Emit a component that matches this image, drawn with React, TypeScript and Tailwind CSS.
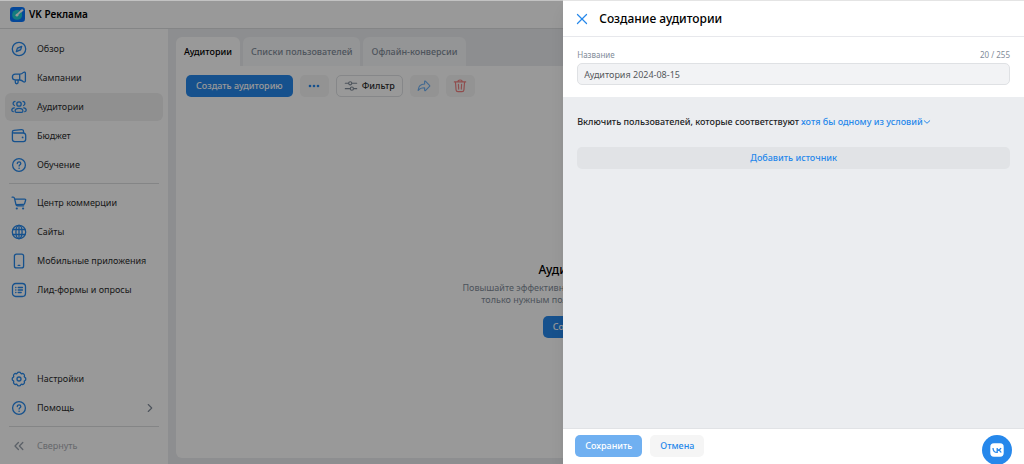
import React from "react";
import type { ReactNode } from "react";

type IconProps = { children: ReactNode; className?: string };

function Icon({ children, className = "size-4" }: IconProps) {
  return (
    <svg
      viewBox="0 0 16 16"
      fill="none"
      stroke="currentColor"
      strokeWidth="1.3"
      strokeLinecap="round"
      strokeLinejoin="round"
      aria-hidden="true"
      className={`${className} shrink-0`}
    >
      {children}
    </svg>
  );
}

const CompassIcon = () => (
  <Icon>
    <circle cx="8" cy="8" r="6.7" />
    <path d="M10.7 5.3 9.6 8.9 5.3 10.7 6.4 7.1z" />
    <circle cx="8" cy="8" r=".5" fill="currentColor" stroke="none" />
  </Icon>
);

const MegaphoneIcon = () => (
  <Icon>
    <path d="M8.7 4.2H4.3a2.900 2.900 0 0 0 0 5.800h4.400zM8.700 4.200c1.700 0 2.900-.9 3.800-1.800.6-.5 1.900-.2 1.900.8v7.800c0 1-1.300 1.300-1.900.8-.9-.9-2.100-1.800-3.800-1.800M4.300 10v2.300c0 1.900 2.800 1.900 2.800 0V10" />
  </Icon>
);

const UsersIcon = () => (
  <Icon>
    <circle cx="8" cy="5" r="2.200" />
    <path d="M8 9.300c-2.400 0-3.900 1.200-3.900 2.700 0 .8.500 1.300 1.200 1.300h5.400c.7 0 1.200-.5 1.200-1.300 0-1.500-1.500-2.700-3.900-2.700zM4 2.300a2.200 2.200 0 0 0-.6 4.200M12 2.300a2.200 2.200 0 0 1 .6 4.200M3.300 8.800C1.600 9 .8 9.900.8 11c0 .9.500 1.500 1.400 1.600M12.700 8.800c1.700.2 2.500 1.100 2.500 2.200 0 .9-.5 1.500-1.400 1.600" />
  </Icon>
);

const WalletIcon = () => (
  <Icon>
    <path d="M1.400 3.900v7.400c0 1.700.8 2.400 2.400 2.400h8.500c1.600 0 2.400-.7 2.400-2.400V7.400c0-1.600-.8-2.400-2.400-2.400H3c-2.100 0-2.100-2.500 0-2.700l7.300-.6c1.500-.1 2.200.5 2.200 1.800V5" />
    <circle cx="11.600" cy="9.400" r=".9" fill="currentColor" stroke="none" />
  </Icon>
);

const HelpIcon = () => (
  <Icon>
    <circle cx="8" cy="8" r="6.400" />
    <path d="M6.300 6.500c0-2.300 3.500-2.200 3.500-.1 0 1.300-1.700 1.400-1.700 2.700" />
    <circle cx="8.100" cy="11.200" r=".8" fill="currentColor" stroke="none" />
  </Icon>
);

const CartIcon = () => (
  <Icon>
    <path d="M1.100 2.200h1.100c.8 0 1.100.3 1.300 1.100l1.500 6.400c.2.800.6 1.100 1.400 1.100h6.300M3.700 3.900l10.200.3c.6 0 .9.400.7 1l-1 3.400c-.2.600-.5.800-1.100.8L5 9.700" />
    <circle cx="5.800" cy="13.500" r="1.100" fill="currentColor" stroke="none" />
    <circle cx="12.100" cy="13.500" r="1.100" fill="currentColor" stroke="none" />
  </Icon>
);

const GlobeIcon = () => (
  <Icon>
    <circle cx="8" cy="8" r="6.700" />
    <ellipse cx="8" cy="8" rx="3.100" ry="6.700" />
    <path d="M8 1.300v13.400M2 5.500h12M2 10.500h12" />
  </Icon>
);

const PhoneIcon = () => (
  <Icon>
    <rect x="3.400" y="1.100" width="9.200" height="13.800" rx="2" />
    <path d="M7.200 12.400h1.600" />
  </Icon>
);

const FormIcon = () => (
  <Icon>
    <rect x="1.500" y="1.500" width="13" height="13" rx="3.200" />
    <path d="M7.200 5.500h4.300M7.200 8h4.300M7.200 10.500h3M4.700 5.500h.2M4.700 8h.2M4.700 10.500h.2" />
  </Icon>
);

const GearIcon = () => (
  <Icon>
    <path d="M6.300 2.100c.5-1.200 2.900-1.200 3.400 0 .2.600.7.800 1.300.5 1.200-.5 2.900 1.200 2.400 2.400-.3.600-.1 1.100.5 1.300 1.200.5 1.200 2.900 0 3.400-.6.200-.8.700-.5 1.300.5 1.200-1.200 2.900-2.400 2.400-.6-.3-1.100-.1-1.300.5-.5 1.200-2.900 1.200-3.400 0-.2-.6-.7-.8-1.300-.5-1.200.5-2.900-1.200-2.400-2.400.3-.6.100-1.100-.5-1.300-1.200-.5-1.200-2.900 0-3.400.6-.2.800-.7.500-1.300-.5-1.200 1.200-2.900 2.400-2.400.6.300 1.100.1 1.300-.5z" />
    <circle cx="8" cy="8" r="2" />
  </Icon>
);

type NavEntry = { label: string; icon: ReactNode; active?: boolean; arrow?: boolean };

const mainNav: NavEntry[] = [
  { label: "Обзор", icon: <CompassIcon /> },
  { label: "Кампании", icon: <MegaphoneIcon /> },
  { label: "Аудитории", icon: <UsersIcon />, active: true },
  { label: "Бюджет", icon: <WalletIcon /> },
  { label: "Обучение", icon: <HelpIcon /> },
];

const toolsNav: NavEntry[] = [
  { label: "Центр коммерции", icon: <CartIcon /> },
  { label: "Сайты", icon: <GlobeIcon /> },
  { label: "Мобильные приложения", icon: <PhoneIcon /> },
  { label: "Лид-формы и опросы", icon: <FormIcon /> },
];

const bottomNav: NavEntry[] = [
  { label: "Настройки", icon: <GearIcon /> },
  { label: "Помощь", icon: <HelpIcon />, arrow: true },
];

function NavList({ items }: { items: NavEntry[] }) {
  return (
    <ul className="flex flex-col gap-px">
      {items.map((item) => (
        <li key={item.label}>
          <a
            href="#"
            aria-current={item.active ? "page" : undefined}
            className={`flex h-7 items-center gap-2.5 rounded-md px-1.5 text-[#2c2d2e] ${
              item.active ? "bg-[#f0f0f1]" : ""
            }`}
          >
            <span className="text-[#2688eb]">{item.icon}</span>
            <span className="flex-1 whitespace-nowrap">{item.label}</span>
            {item.arrow && (
              <Icon className="size-3.5 text-[#818c99]">
                <path d="m6 4 4 4-4 4" />
              </Icon>
            )}
          </a>
        </li>
      ))}
    </ul>
  );
}

function Sidebar() {
  return (
    <nav className="flex w-[168px] shrink-0 flex-col bg-white px-[5px] pt-1.5 pb-1">
      <NavList items={mainNav} />
      <hr className="mx-1 mt-1 mb-[5px] border-[#dcdee0]" />
      <NavList items={toolsNav} />
      <div className="mt-auto">
        <NavList items={bottomNav} />
        <hr className="mx-1 mt-1 mb-[5px] border-[#dcdee0]" />
        <button type="button" className="flex h-7 w-full items-center gap-2.5 px-1.5 text-[#aaaeb3]">
          <Icon className="size-4 text-[#99a2ad]">
            <path d="M7.400 4.500 4 8l3.400 3.500M11.800 4.500 8.400 8l3.400 3.500" />
          </Icon>
          Свернуть
        </button>
      </div>
    </nav>
  );
}

const tabs = ["Аудитории", "Списки пользователей", "Офлайн-конверсии"];

function Workspace() {
  return (
    <main className="flex min-w-0 flex-1 flex-col bg-[#ebedf0] px-2 pt-2 pb-1.5">
      <div role="tablist" className="flex gap-[3px]">
        {tabs.map((tab, i) => (
          <button
            key={tab}
            type="button"
            role="tab"
            aria-selected={i === 0}
            className={`h-[29px] rounded-t-md px-2 font-medium whitespace-nowrap ${
              i === 0 ? "bg-white text-black" : "bg-[#f7f8fa] text-[#818c99]"
            }`}
          >
            {tab}
          </button>
        ))}
      </div>
      <section className="flex flex-1 flex-col rounded-b-md rounded-tr-md bg-white px-2.5 pt-[9px]">
        <div className="flex gap-[7px] text-[#2688eb]">
          <button type="button" className="h-[22px] rounded-[5px] bg-[#2688eb] px-2.5 font-medium whitespace-nowrap text-white">
            Создать аудиторию
          </button>
          <button type="button" aria-label="Ещё" className="flex h-[22px] w-[29px] items-center justify-center rounded-[5px] bg-[#f5f5f5]">
            <svg viewBox="0 0 12 4" fill="currentColor" aria-hidden="true" className="h-1 w-3">
              <circle cx="2" cy="2" r="1.300" />
              <circle cx="6" cy="2" r="1.300" />
              <circle cx="10" cy="2" r="1.300" />
            </svg>
          </button>
          <button type="button" className="flex h-[22px] items-center gap-1 rounded-[5px] border border-[#dfe1e4] px-[7px] font-medium text-[#2c2d2e]">
            <Icon className="size-3.5 text-[#818c99]">
              <path d="M1.500 4.900h3.600M9.100 4.900h5.400M1.500 11h5.500M11 11h3.500" />
              <circle cx="7.100" cy="4.900" r="1.800" />
              <circle cx="9" cy="11" r="1.800" />
            </Icon>
            Фильтр
          </button>
          <button type="button" aria-label="Поделиться" className="flex h-[22px] w-[29px] items-center justify-center rounded-[5px] bg-[#f5f5f5] text-[#6fb0f2]">
            <Icon className="size-3.5">
              <path d="M8.700 2.800v2.900C4.300 5.800 1.600 8.400 1.300 13c1.900-2.300 4.300-3.100 7.400-3v2.900c0 .5.500.7.9.3l4.700-4.700c.4-.4.400-.8 0-1.200L9.600 2.500c-.4-.4-.9-.2-.9.3z" />
            </Icon>
          </button>
          <button type="button" aria-label="Удалить" className="flex h-[22px] w-[29px] items-center justify-center rounded-[5px] bg-[#f5f5f5] text-[#f08080]">
            <Icon className="size-3.5">
              <path d="M1.500 3.300h13M5.500 3.200c0-2.700 5-2.700 5 0M2.800 3.500l.7 8.900c.1 1.400.8 2.100 2.200 2.100h4.600c1.400 0 2.100-.7 2.200-2.100l.7-8.900M6.200 6.200l.3 5.300M9.800 6.200l-.3 5.300" />
            </Icon>
          </button>
        </div>
        <div className="flex flex-1 flex-col items-center justify-center pt-11 text-center">
          <h2 className="text-[12px] leading-4 font-medium whitespace-nowrap text-black">Аудитории проекта</h2>
          <p className="mt-1 leading-3 whitespace-nowrap text-[#818c99]">
            Повышайте эффективность кампаний: показывайте рекламу
            <br />
            только нужным пользователям из вашей аудитории
          </p>
          <button type="button" className="mt-2.5 h-[22px] rounded-[5px] bg-[#2688eb] px-2.5 font-medium whitespace-nowrap text-white">
            Создать аудиторию
          </button>
        </div>
      </section>
    </main>
  );
}

function Drawer() {
  return (
    <aside
      role="dialog"
      aria-label="Создание аудитории"
      className="absolute inset-y-0 right-0 flex w-[45%] flex-col border-t border-[#e4e4e4] bg-[#ebedf0] shadow-lg"
    >
      <header className="flex h-9 shrink-0 items-center gap-2.5 border-b border-[#e7e8ec] bg-white px-3">
        <button type="button" aria-label="Закрыть" className="text-[#2688eb]">
          <Icon className="block size-3.5">
            <path d="m2.800 2.800 10.400 10.400M13.200 2.800 2.800 13.200" strokeWidth="1.400" />
          </Icon>
        </button>
        <h1 className="text-[12px] font-medium text-black">Создание аудитории</h1>
      </header>
      <div className="flex flex-col gap-0.5 bg-white px-3.5 pt-3 pb-3">
        <div className="flex justify-between text-[8px] leading-3 text-[#818c99]">
          <label htmlFor="audience-name">Название</label>
          <span>20 / 255</span>
        </div>
        <input
          id="audience-name"
          defaultValue="Аудитория 2024-08-15"
          className="h-[22px] w-full rounded-[5px] border border-[#dfe1e4] bg-[#f2f3f5] px-1.5 text-[#55585c]"
        />
      </div>
      <div className="flex flex-1 flex-col px-3.5 pt-[19px]">
        <div className="flex items-center gap-0.5 leading-3 font-medium whitespace-nowrap text-[#222324]">
          Включить пользователей, которые соответствуют
          <button type="button" className="flex items-center text-[#2688eb]">
            хотя бы одному из условий
            <Icon className="size-2">
              <path d="m2.500 5.500 5.500 5 5.500-5" strokeWidth="2" />
            </Icon>
          </button>
        </div>
        <button type="button" className="mt-[19px] h-[22px] rounded-[5px] bg-[#e1e3e6] font-medium text-[#2688eb]">
          Добавить источник
        </button>
      </div>
      <footer className="flex h-9 shrink-0 items-start gap-2 border-t border-[#e1e3e6] bg-white px-3 pt-1.5">
        <button type="button" className="h-[22px] rounded-[5px] bg-[#70b0f1] px-2.5 font-medium text-white">
          Сохранить
        </button>
        <button type="button" className="h-[22px] rounded-[5px] bg-[#f5f5f5] px-2.5 font-medium text-[#2688eb]">
          Отмена
        </button>
      </footer>
      <button
        type="button"
        aria-label="ВКонтакте"
        className="absolute right-3 -bottom-px flex size-[30px] items-center justify-center rounded-full bg-[#2688eb]"
      >
        <svg viewBox="0 0 14 14" aria-hidden="true" className="size-3.5">
          <rect x=".3" y=".3" width="13.400" height="13.400" rx="3.600" fill="#fff" />
          <path d="M3 4.900c.1 2.900 1.600 4.500 4.200 4.500V4.900M11 4.900C10.500 6.200 9.400 7 7.400 7.100c2 .1 3.200.9 3.800 2.300" fill="none" stroke="#2688eb" strokeWidth="1.300" />
        </svg>
      </button>
    </aside>
  );
}

export default function App() {
  return (
    <div className="relative flex min-h-screen flex-col overflow-hidden bg-white font-['Noto_Sans','Open_Sans',sans-serif] text-[9px]">
      <header className="flex h-[29px] shrink-0 items-center gap-1 border-b border-[#dcdee0] px-2.5">
        <svg viewBox="0 0 16 16" aria-hidden="true" className="size-[15px]">
          <rect width="16" height="16" rx="3.500" fill="#0877ff" />
          <circle cx="7.600" cy="8.400" r="5.300" fill="#20cfd2" />
          <path d="m7.300 8.700 4.300-4.300" stroke="#fff" strokeWidth="1.700" strokeLinecap="round" />
          <path d="m10.700 4.300 2.400-2.400.4 1.100 1.100.4-2.400 2.400-1.200-.3z" fill="#fff" />
          <circle cx="7.400" cy="8.700" r="1.500" fill="#fff" />
        </svg>
        <span className="text-[10px] font-semibold text-black">VK Реклама</span>
      </header>
      <div className="flex flex-1">
        <Sidebar />
        <Workspace />
      </div>
      <div className="absolute inset-0 border-t border-white/40 bg-black/40" />
      <Drawer />
    </div>
  );
}
